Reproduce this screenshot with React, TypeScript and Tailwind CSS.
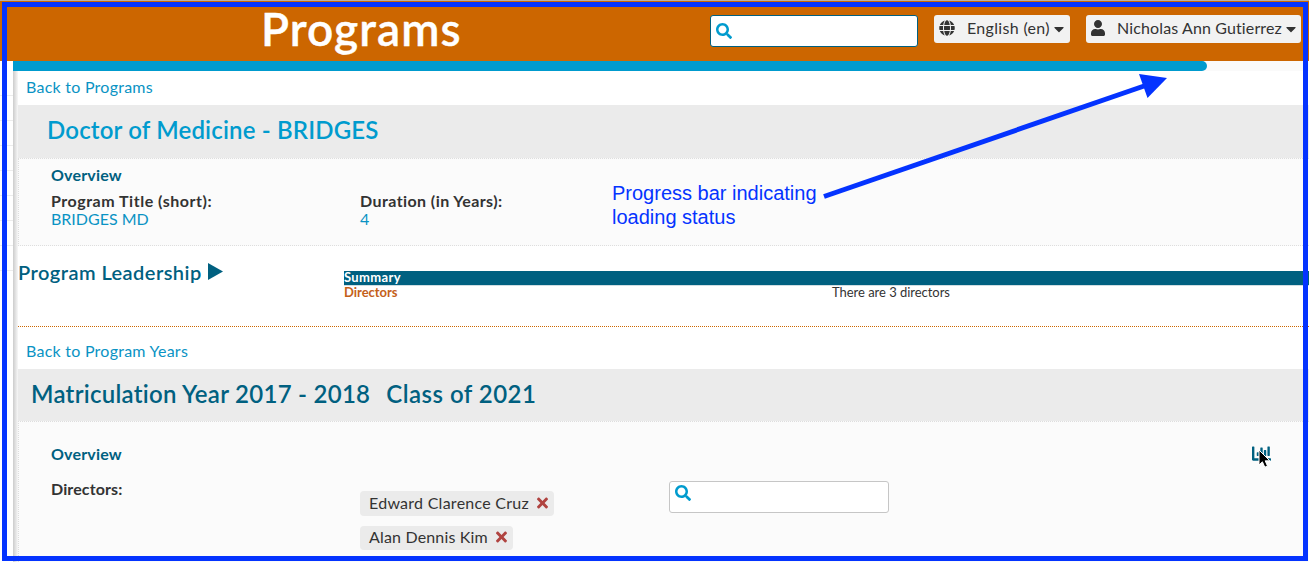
import type { ReactNode } from "react";
import { FaCaretDown, FaChartBar, FaGlobe, FaSearch, FaTimes, FaUser } from "react-icons/fa";

function BackLink({ children, className }: { children: ReactNode; className: string }) {
  return (
    <div className={`flex items-center pl-2 text-[#0a93c4] ${className}`}>
      <a href="#" className="tracking-[0.25px]">{children}</a>
    </div>
  );
}

function Director({ name, className }: { name: string; className: string }) {
  return (
    <li className={`flex w-fit items-center gap-2 rounded-[4px] bg-[#ebebeb] pl-[9px] pr-[6px] leading-none ${className}`}>
      <span>{name}</span>
      <FaTimes className="h-4 w-[11px] text-[#b04340]" />
    </li>
  );
}

function Header() {
  return (
    <header className="flex h-[61px] shrink-0 items-start border-t border-[#b5afa8] bg-[#cc6600] pl-[261px]">
      <h1 className="w-[449px] text-[46px] font-semibold leading-[56px] tracking-[1.05px] text-white [-webkit-text-stroke:0.4px_white]">
        Programs
      </h1>
      <div className="mt-[14px] flex h-8 w-[208px] items-center rounded-[3px] border border-[#006080] bg-white pl-[5px]">
        <FaSearch className="size-4 text-[#009bce]" />
      </div>
      <button className="ml-4 mt-[14px] flex h-7 w-[136px] items-center rounded-[3px] bg-[#f2f2f2] pb-0.5 pl-[5px] text-[#333]">
        <FaGlobe className="mr-3 size-4" />
        <span className="w-[87px] text-left tracking-[0.33px]">English (en)</span>
        <FaCaretDown className="mt-0.5 h-4 w-[10px]" />
      </button>
      <button className="ml-4 mt-[14px] flex h-7 w-[215px] items-center rounded-[3px] bg-[#f2f2f2] pb-0.5 pl-[5px] text-[#333]">
        <FaUser className="mr-3 h-4 w-[14px]" />
        <span className="w-[169px] whitespace-nowrap text-left tracking-[0.13px]">Nicholas Ann Gutierrez</span>
        <FaCaretDown className="mt-0.5 h-4 w-[10px]" />
      </button>
    </header>
  );
}

function Sidebar() {
  return (
    <aside className="flex w-[13px] shrink-0 flex-col pt-[34px]">
      {[0, 1, 2, 3, 4, 5, 6, 7].map((n) => (
        <div key={n} className="h-[25px] shrink-0 border-t border-[#ececec]" />
      ))}
    </aside>
  );
}

export default function App() {
  return (
    <div className="relative flex h-[562px] w-[1309px] flex-col overflow-hidden bg-white font-['Lato',sans-serif] text-base text-[#333] [font-variant-ligatures:none]">
      <Header />
      <div className="flex min-h-0 grow">
        <Sidebar />
        <div className="flex min-w-0 grow flex-col">
          <div className="h-[10px] shrink-0 bg-[#fafafa]">
            <div className="h-full w-[1194px] rounded-r-[5px] bg-[#009bce]" />
          </div>
          <div className="flex min-h-0 grow">
            <div className="w-[5px] shrink-0 bg-gradient-to-r from-[#cccccc] to-[#f8f8f8]" />
            <main className="flex min-w-0 grow flex-col">
              <BackLink className="h-[34px] pb-0.5">Back to Programs</BackLink>
              <h2 className="h-[53px] shrink-0 bg-[#ebebeb] pl-[29px] text-2xl font-semibold leading-[50px] tracking-[0.17px] text-[#009bce]">
                Doctor of Medicine - BRIDGES
              </h2>
              <section className="h-[88px] shrink-0 border border-r-0 border-dotted border-[#dedede] bg-[#fbfbfb] pl-8 pt-[7px]">
                <h3 className="font-bold leading-[18px] tracking-[0.18px] text-[#006080]">Overview</h3>
                <div className="mt-2 grid grid-cols-[309px_309px] leading-[18px]">
                  <div>
                    <div className="font-bold tracking-[0.52px]">Program Title (short):</div>
                    <div className="text-[#0a93c4]">BRIDGES MD</div>
                  </div>
                  <div>
                    <div className="font-bold tracking-[0.42px]">Duration (in Years):</div>
                    <div className="text-[#0a93c4]">4</div>
                  </div>
                </div>
              </section>
              <section className="flex h-[81px] shrink-0 border-b border-dotted border-[#cc6600]">
                <h3 className="flex w-[326px] items-start gap-[6px] pt-[14px] text-xl font-semibold leading-6 tracking-[0.45px] text-[#006080]">
                  Program Leadership
                  <svg className="mt-[3px] h-[17px] w-[15px]" viewBox="0 0 15 17" fill="currentColor">
                    <path d="M0 0 15 8.5 0 17Z" />
                  </svg>
                </h3>
                <div className="grow pt-[25px] text-[13px]">
                  <div className="h-[14px] bg-[#006080] font-bold leading-[13px] tracking-[0.36px] text-white">Summary</div>
                  <div className="grid grid-cols-[488px_1fr] border-t border-[#cfdde2] leading-[13px]">
                    <span className="font-bold tracking-[-0.02px] text-[#c4601a]">Directors</span>
                    <span className="tracking-[-0.03px]">There are 3 directors</span>
                  </div>
                </div>
              </section>
              <BackLink className="h-[42px] pt-[6px]">Back to Program Years</BackLink>
              <h2 className="flex h-[52px] shrink-0 gap-4 bg-[#ebebeb] pl-[13px] text-2xl font-semibold leading-[50px] tracking-[0.27px] text-[#006080]">
                <span>Matriculation Year 2017 - 2018</span>
                <span className="tracking-[0.48px]">Class of 2021</span>
              </h2>
              <section className="min-h-0 grow border-l border-t border-dotted border-[#dedede] bg-[#fbfbfb] pl-8 pt-[22px]">
                <div className="flex h-[19px] items-center justify-between pr-[38px]">
                  <h3 className="font-bold tracking-[0.18px] text-[#006080]">Overview</h3>
                  <FaChartBar className="size-[19px] text-[#006080]" />
                </div>
                <div className="flex pt-4">
                  <h4 className="w-[309px] font-bold leading-5 tracking-[0.12px]">Directors:</h4>
                  <ul className="w-[309px] pt-[12px]">
                    <Director name="Edward Clarence Cruz" className="h-[25px] pb-px tracking-[0.26px]" />
                    <Director name="Alan Dennis Kim" className="mt-[10px] h-[24px] pb-[2px] tracking-[0.17px]" />
                  </ul>
                  <div className="mt-[2px] flex h-8 w-[220px] items-start rounded-[3px] border border-[#c6c6c6] bg-white pl-[5px] pt-[3px]">
                    <FaSearch className="size-4 text-[#009bce]" />
                  </div>
                </div>
              </section>
            </main>
          </div>
        </div>
      </div>

      <p className="absolute left-[612px] top-[181px] whitespace-nowrap font-['Liberation_Sans',sans-serif] text-xl leading-6 text-[#0433ff]">
        Progress bar indicating
        <br />
        loading status
      </p>
      <svg className="absolute left-0 top-0" width="1309" height="562" viewBox="0 0 1309 562">
        <path d="M824 196.500 1147 85" stroke="#0433ff" strokeWidth="5" />
        <path d="M1139 74 1167 78 1147.500 98Z" fill="#0433ff" />
        <path d="M1259 450v15l3.400-3.200 2.400 5.400 2.700-1.200-2.300-5.200h4.600Z" fill="#000" stroke="#fff" strokeWidth="1" />
      </svg>
      <div className="absolute bottom-[1px] left-[2px] right-[1px] top-[2px] border-[5px] border-[#0433ff]" />
    </div>
  );
}
